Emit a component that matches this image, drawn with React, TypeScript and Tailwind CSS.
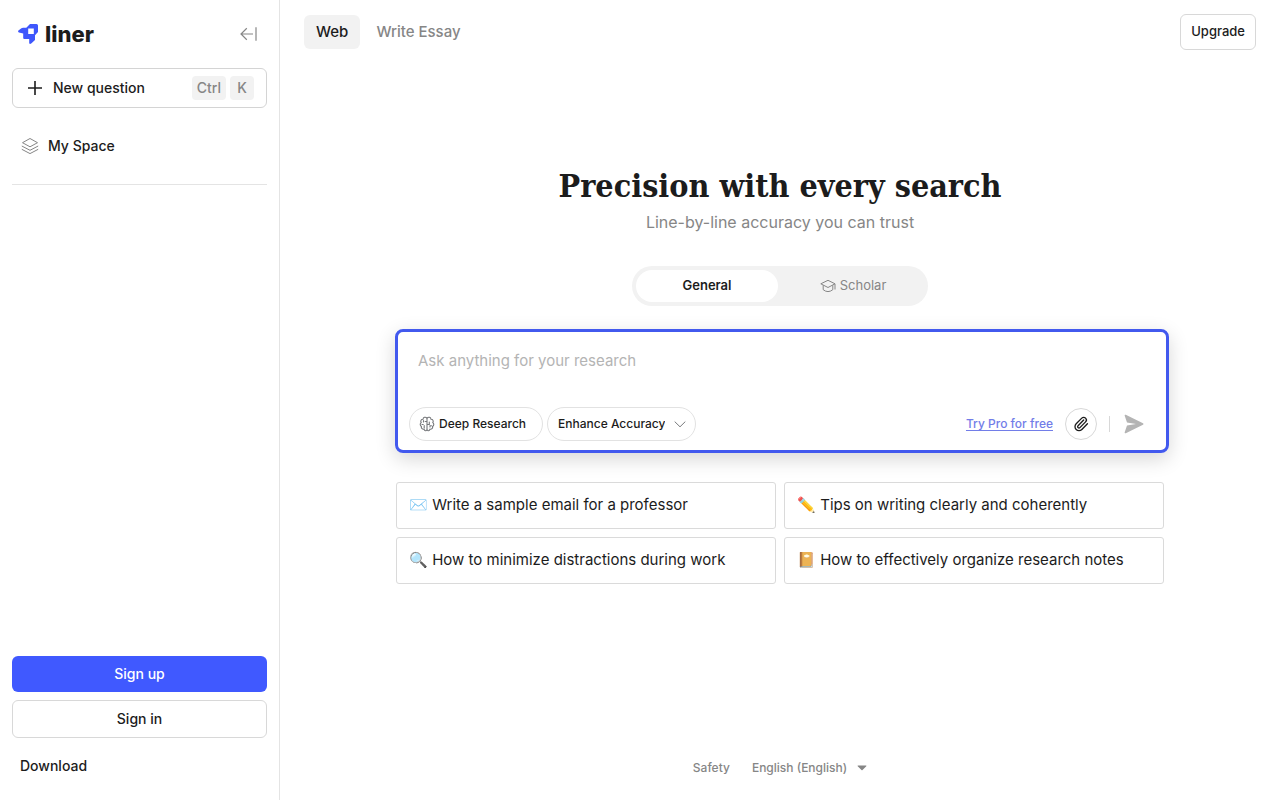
import { Paperclip } from 'lucide-react';

const suggestions = [
  { emoji: '✉️', text: 'Write a sample email for a professor' },
  { emoji: '✏️', text: 'Tips on writing clearly and coherently' },
  { emoji: '🔍', text: 'How to minimize distractions during work' },
  { emoji: '📔', text: 'How to effectively organize research notes' },
];

const Logo = () => (
  <a href="#" className="flex items-center gap-[7px]">
    <svg width="20" height="20" viewBox="0 0 20 20" fill="none">
      <path
        fillRule="evenodd"
        d="M12 0H18.500Q20 0 20 1.500V8L17 11.300V16L13.500 19.300Q11.600 20.800 11.200 19V15H6.300Q5.200 15 5.200 14V9.500L.9 8.500Q-.4 7.800.4 6.600L3.400 4.200Q4 3.800 5 3.800H8.300ZM10.200 4.400V9.900H15.800V4.400Z"
        fill="#3f57fc"
      />
    </svg>
    <span className="text-[22px] leading-6 font-extrabold">liner</span>
  </a>
);

const Sidebar = () => (
  <aside className="flex w-[280px] shrink-0 flex-col border-r border-[#e4e4e4] px-3 pb-[22px]">
    <div className="flex h-[68px] items-center justify-between pr-2 pl-[6px]">
      <Logo />
      <button aria-label="Collapse sidebar">
        <svg width="20" height="20" viewBox="0 0 20 20" fill="none" stroke="#868686" strokeWidth="1.2">
          <path d="M14 10H2.200M7.800 4.300L2 10l5.800 5.700M17 3.200v13.600" />
        </svg>
      </button>
    </div>
    <button className="flex h-10 items-center rounded-md border border-[#d4d4d4] px-3 text-sm font-medium">
      <svg width="20" height="20" viewBox="0 0 20 20" stroke="#1c1c1c" strokeWidth="1.6">
        <path d="M3 10h14M10 3v14" />
      </svg>
      <span className="ml-2">New question</span>
      <span className="ml-auto flex gap-1 text-[#868686]">
        <kbd className="h-6 rounded-sm bg-[#f2f2f2] px-[5px] font-[inherit] leading-6">Ctrl</kbd>
        <kbd className="h-6 w-6 rounded-sm bg-[#f2f2f2] font-[inherit] leading-6">K</kbd>
      </span>
    </button>
    <nav className="mt-5 border-b border-[#e4e4e4] pb-5">
      <a href="#" className="flex h-9 items-center gap-2 px-2 text-sm font-medium">
        <svg width="20" height="20" viewBox="0 0 20 20" fill="none" stroke="#868686" strokeLinejoin="round">
          <path d="M10 2.500L17.500 6.700 10 10.800 2.500 6.700ZM1.800 10L10 14.300 18.200 10M1.800 13.300L10 17.600l8.200-4.300" />
        </svg>
        My Space
      </a>
    </nav>
    <div className="mt-auto flex flex-col gap-2 text-sm font-medium">
      <button className="h-9 rounded-md bg-[#4059ff] text-white">Sign up</button>
      <button className="h-[38px] rounded-md border border-[#d8d8d8]">Sign in</button>
      <a href="#" className="mt-2 px-2 leading-6">Download</a>
    </div>
  </aside>
);

const SearchBox = () => (
  <form className="mt-[23px] -mr-[5px] -ml-px flex flex-col rounded-lg border-3 border-[#4259ee] px-[11px] pt-4 pb-[9px] shadow-[0_6px_20px_rgba(0,0,0,0.16)]">
    <textarea
      aria-label="Ask anything for your research"
      placeholder="Ask anything for your research"
      rows={1}
      className="h-[59px] resize-none px-[9px] text-[15px] leading-[26px] outline-none placeholder:text-[#b4b4b4]"
    />
    <div className="flex items-center text-xs font-medium">
      <button type="button" className="flex h-[34px] items-center gap-1 rounded-full border border-[#e2e2e2] pr-4 pl-[9px]">
        <svg width="16" height="16" viewBox="0 0 16 16" fill="none" stroke="#77797c" strokeWidth="1.1" strokeLinecap="round">
          <path d="M8 2.200C6.500.4 4.200 1.300 4 3.200 2 3.200 1.200 5.200 2.200 6.600.8 7.500.9 9.700 2.400 10.500 2 12.300 3.500 13.600 5 13.200 5.700 15.200 7.300 15 8 14 8.700 15 10.300 15.200 11 13.200 12.500 13.600 14 12.300 13.600 10.500 15.100 9.700 15.200 7.500 13.800 6.600 14.800 5.200 14 3.200 12 3.200 11.800 1.300 9.500.4 8 2.200Z" />
          <path d="M8 2.200V14M8 5.500H6.200M5.200 9.500V12M3 8.500h1.200M8 8.500h2.300V6M11 11V9.800h1.500M4.500 4.500V6" />
        </svg>
        Deep Research
      </button>
      <div className="relative ml-1 flex items-center">
        <select
          aria-label="Enhance Accuracy"
          className="h-[34px] appearance-none rounded-full border border-[#e2e2e2] pr-[30px] pl-[10px] [field-sizing:content]"
        >
          <option>Enhance Accuracy</option>
        </select>
        <svg className="pointer-events-none absolute right-[10px]" width="12" height="12" viewBox="0 0 12 12" fill="none" stroke="#77797c">
          <path d="M.7 3.600L6 8.800l5.300-5.200" />
        </svg>
      </div>
      <a href="#" className="ml-auto text-[#727de8] underline underline-offset-2">Try Pro for free</a>
      <button type="button" aria-label="Attach file" className="ml-3 flex size-8 items-center justify-center rounded-full border border-[#d8d8d8]">
        <Paperclip size={16} strokeWidth={2} />
      </button>
      <span className="mx-3 h-4 w-px bg-[#d8d8d8]" />
      <button aria-label="Send" className="mr-[9px]">
        <svg width="24" height="24" viewBox="0 0 24 24" fill="#b4b4b4">
          <path d="M2.700 3.700Q2.400 2.300 3.800 2.800L21 11.200Q22.200 12 21 12.800L3.800 21.200Q2.400 21.700 2.700 20.300L5 13.500 14 12 5 10.500Z" />
        </svg>
      </button>
    </div>
  </form>
);

export default function App() {
  return (
    <div className="flex min-h-screen bg-white font-['Inter',sans-serif] text-[#1c1c1c]">
      <Sidebar />
      <div className="flex min-w-0 flex-1 flex-col">
        <header className="flex h-16 items-center justify-between px-6">
          <nav className="flex gap-1 text-[15px] font-medium">
            <a href="#" className="rounded-md bg-[#f2f2f2] px-3 leading-[34px]">Web</a>
            <a href="#" className="px-3 leading-[34px] text-[#868686]">Write Essay</a>
          </nav>
          <button className="h-9 rounded-md border border-[#d8d8d8] px-[10px] text-[13px] font-medium">Upgrade</button>
        </header>

        <main className="mx-auto w-full max-w-[768px] flex-1 pt-[100px]">
          <div className="text-center">
            <h1 className="font-['DejaVu_Serif_Condensed','DejaVu_Serif',serif] text-[32px] leading-11 font-bold">
              Precision with every search
            </h1>
            <p className="mt-[2px] leading-6 text-[#868686]">Line-by-line accuracy you can trust</p>
          </div>
          <div className="mx-auto mt-8 grid h-10 w-[296px] grid-cols-2 gap-1 rounded-full bg-[#f2f2f2] p-1 text-[13px]">
            <button className="rounded-full bg-white font-semibold">General</button>
            <button className="flex items-center justify-center gap-1 text-[#868686]">
              <svg width="16" height="16" viewBox="0 0 16 16" fill="none" stroke="#868686" strokeLinejoin="round">
                <path d="M8 2.300L15 5.800 8 9.500.8 5.800ZM3.200 7.200v4.500Q8 15.500 12.800 11.700V7.200M15 5.800v5.700" />
              </svg>
              Scholar
            </button>
          </div>
          <SearchBox />
          <div className="mt-[29px] grid grid-cols-2 gap-2">
            {suggestions.map((item) => (
              <button key={item.text} className="h-[47px] rounded-[3px] border border-[#dadada] px-3 text-left text-[15px]">
                {item.emoji} {item.text}
              </button>
            ))}
          </div>
        </main>

        <footer className="flex h-16 items-center justify-center gap-[22px] text-xs font-medium text-[#868686]">
          <a href="#">Safety</a>
          <div className="relative flex items-center">
            <select aria-label="Language" className="appearance-none pr-5 [field-sizing:content]">
              <option>English (English)</option>
            </select>
            <svg className="pointer-events-none absolute right-0" width="10" height="6" viewBox="0 0 10 6" fill="#868686">
              <path d="M1 .5h8q.8 0 .3.7L5.500 5q-.5.500-1 0L.7 1.200Q.2.500 1 .5Z" />
            </svg>
          </div>
        </footer>
      </div>
    </div>
  );
}
